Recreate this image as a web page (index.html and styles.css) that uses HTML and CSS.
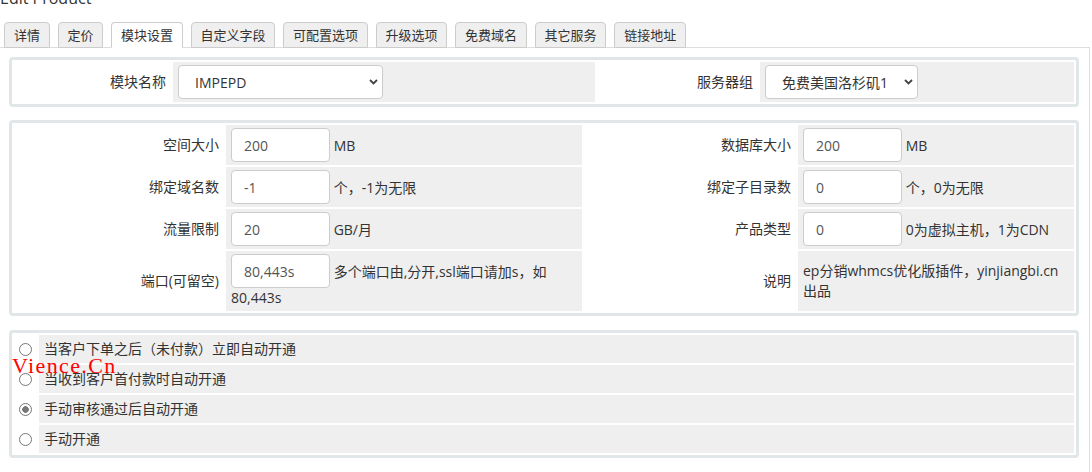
FILE: index.html
```html
<!DOCTYPE html>
<html lang="zh-CN">
<head>
    <meta charset="UTF-8">
    <title>Edit Product</title>
    <link rel="stylesheet" href="styles.css">
</head>
<body>
    <h1 class="page-title">Edit Product</h1>
    <ul class="tabs">
        <li class="tab">详情</li>
        <li class="tab">定价</li>
        <li class="tab active">模块设置</li>
        <li class="tab">自定义字段</li>
        <li class="tab">可配置选项</li>
        <li class="tab">升级选项</li>
        <li class="tab">免费域名</li>
        <li class="tab">其它服务</li>
        <li class="tab">链接地址</li>
    </ul>
    <div class="tab-content">
        <div class="panel panel-module">
            <div class="cell label">模块名称</div>
            <div class="cell field">
                <div class="select-wrap">
                    <select class="select select-module">
                        <option>IMPEPD</option>
                    </select>
                    <svg class="chevron" width="9" height="6" viewBox="0 0 9 6"><polyline points="1,1 4.5,4.5 8,1" fill="none" stroke="#444" stroke-width="1.8"/></svg>
                </div>
            </div>
            <div class="cell label">服务器组</div>
            <div class="cell field">
                <div class="select-wrap">
                    <select class="select select-server">
                        <option>免费美国洛杉矶1</option>
                    </select>
                    <svg class="chevron" width="9" height="6" viewBox="0 0 9 6"><polyline points="1,1 4.5,4.5 8,1" fill="none" stroke="#444" stroke-width="1.8"/></svg>
                </div>
            </div>
        </div>

        <div class="panel panel-specs">
            <div class="cell label">空间大小</div>
            <div class="cell field"><div><input class="input" type="text" value="200"> MB</div></div>
            <div class="cell label">数据库大小</div>
            <div class="cell field"><div><input class="input" type="text" value="200"> MB</div></div>

            <div class="cell label">绑定域名数</div>
            <div class="cell field"><div><input class="input" type="text" value="-1"> 个，-1为无限</div></div>
            <div class="cell label">绑定子目录数</div>
            <div class="cell field"><div><input class="input" type="text" value="0"> 个，0为无限</div></div>

            <div class="cell label">流量限制</div>
            <div class="cell field"><div><input class="input" type="text" value="20"> GB/月</div></div>
            <div class="cell label">产品类型</div>
            <div class="cell field"><div><input class="input" type="text" value="0"> 0为虚拟主机，1为CDN</div></div>

            <div class="cell label">端口(可留空)</div>
            <div class="cell field"><div><input class="input" type="text" value="80,443s"> 多个端口由,分开,ssl端口请加s，如80,443s</div></div>
            <div class="cell label">说明</div>
            <div class="cell field"><div>ep分销whmcs优化版插件，yinjiangbi.cn出品</div></div>
        </div>

        <div class="panel panel-options">
            <div class="cell radio-cell"><input class="radio" type="radio" name="autosetup"></div>
            <div class="cell field option">当客户下单之后（未付款）立即自动开通</div>
            <div class="cell radio-cell"><input class="radio" type="radio" name="autosetup"></div>
            <div class="cell field option">当收到客户首付款时自动开通</div>
            <div class="cell radio-cell"><input class="radio" type="radio" name="autosetup" checked></div>
            <div class="cell field option">手动审核通过后自动开通</div>
            <div class="cell radio-cell"><input class="radio" type="radio" name="autosetup"></div>
            <div class="cell field option">手动开通</div>
        </div>
    </div>
    <div class="watermark">Vience.Cn</div>
</body>
</html>
```

FILE: styles.css
```css
body {
    margin: 0;
    font-family: "Open Sans", "Noto Sans CJK SC", sans-serif;
    font-size: 14px;
    line-height: 20px;
    color: #333;
    position: relative;
}
.page-title {
    margin: -10px 0 0;
    height: 16px;
    font-size: 16px;
    font-weight: normal;
    line-height: 16px;
    color: #333;
}
.tabs {
    display: flex;
    gap: 8px;
    list-style: none;
    margin: 16px 0 -1px;
    padding: 0 0 0 4px;
    position: relative;
    z-index: 1;
}
.tab {
    border: 1px solid #ccc;
    border-radius: 4px 4px 0 0;
    background: #efefef;
    padding: 0 8.5px 0 9px;
    font-size: 13px;
    line-height: 24px;
}
.tab.active {
    background: #fff;
    border-bottom-color: #fff;
}
.tab-content {
    width: 1090px;
    box-sizing: border-box;
    border-top: 1px solid #ddd;
    border-right: 1px solid #ddd;
    padding: 9px 10px 20px 9px;
}
.panel {
    display: grid;
    gap: 2px;
    padding: 2px;
    border: 3px solid #e1e6e8;
    border-radius: 4px;
    background: #fff;
}
.panel-module {
    grid-template-columns: 157px 422px 161px 1fr;
}
.panel-specs {
    grid-template-columns: 210px 356px 212px 1fr;
    margin-top: 13px;
}
.panel-options {
    grid-template-columns: 23px 1fr;
    margin-top: 14px;
}
.cell {
    display: flex;
    align-items: center;
    padding: 3px 5px;
}
.label {
    justify-content: flex-end;
    text-align: right;
}
.field {
    background: #efefef;
}
.option {
    padding: 4px 5px;
}
.radio-cell {
    justify-content: center;
    padding: 0;
}
.select-wrap {
    position: relative;
    display: inline-block;
}
.select {
    appearance: none;
    -webkit-appearance: none;
    box-sizing: border-box;
    height: 34px;
    padding: 0 16px;
    border: 1px solid #ccc;
    border-radius: 4px;
    background: #fff;
    font-family: inherit;
    font-size: 14px;
    color: #333;
}
.select-module {
    width: 205px;
}
.select-server {
    width: 153px;
}
.chevron {
    position: absolute;
    right: 5px;
    top: 14px;
    pointer-events: none;
}
.input {
    box-sizing: border-box;
    width: 99px;
    height: 34px;
    padding: 6px 12px;
    border: 1px solid #ccc;
    border-radius: 4px;
    font-family: inherit;
    font-size: 14px;
    color: #555;
}
.radio {
    appearance: none;
    -webkit-appearance: none;
    width: 13px;
    height: 13px;
    margin: 0;
    border: 1px solid #767676;
    border-radius: 50%;
    background: #fff;
}
.radio:checked {
    background: radial-gradient(circle, #777 0 3px, #fff 3.6px);
}
.watermark {
    position: absolute;
    left: 12px;
    top: 355px;
    font-family: "Liberation Serif", serif;
    font-size: 22px;
    line-height: 22px;
    letter-spacing: 1.4px;
    color: #f00;
}
```
